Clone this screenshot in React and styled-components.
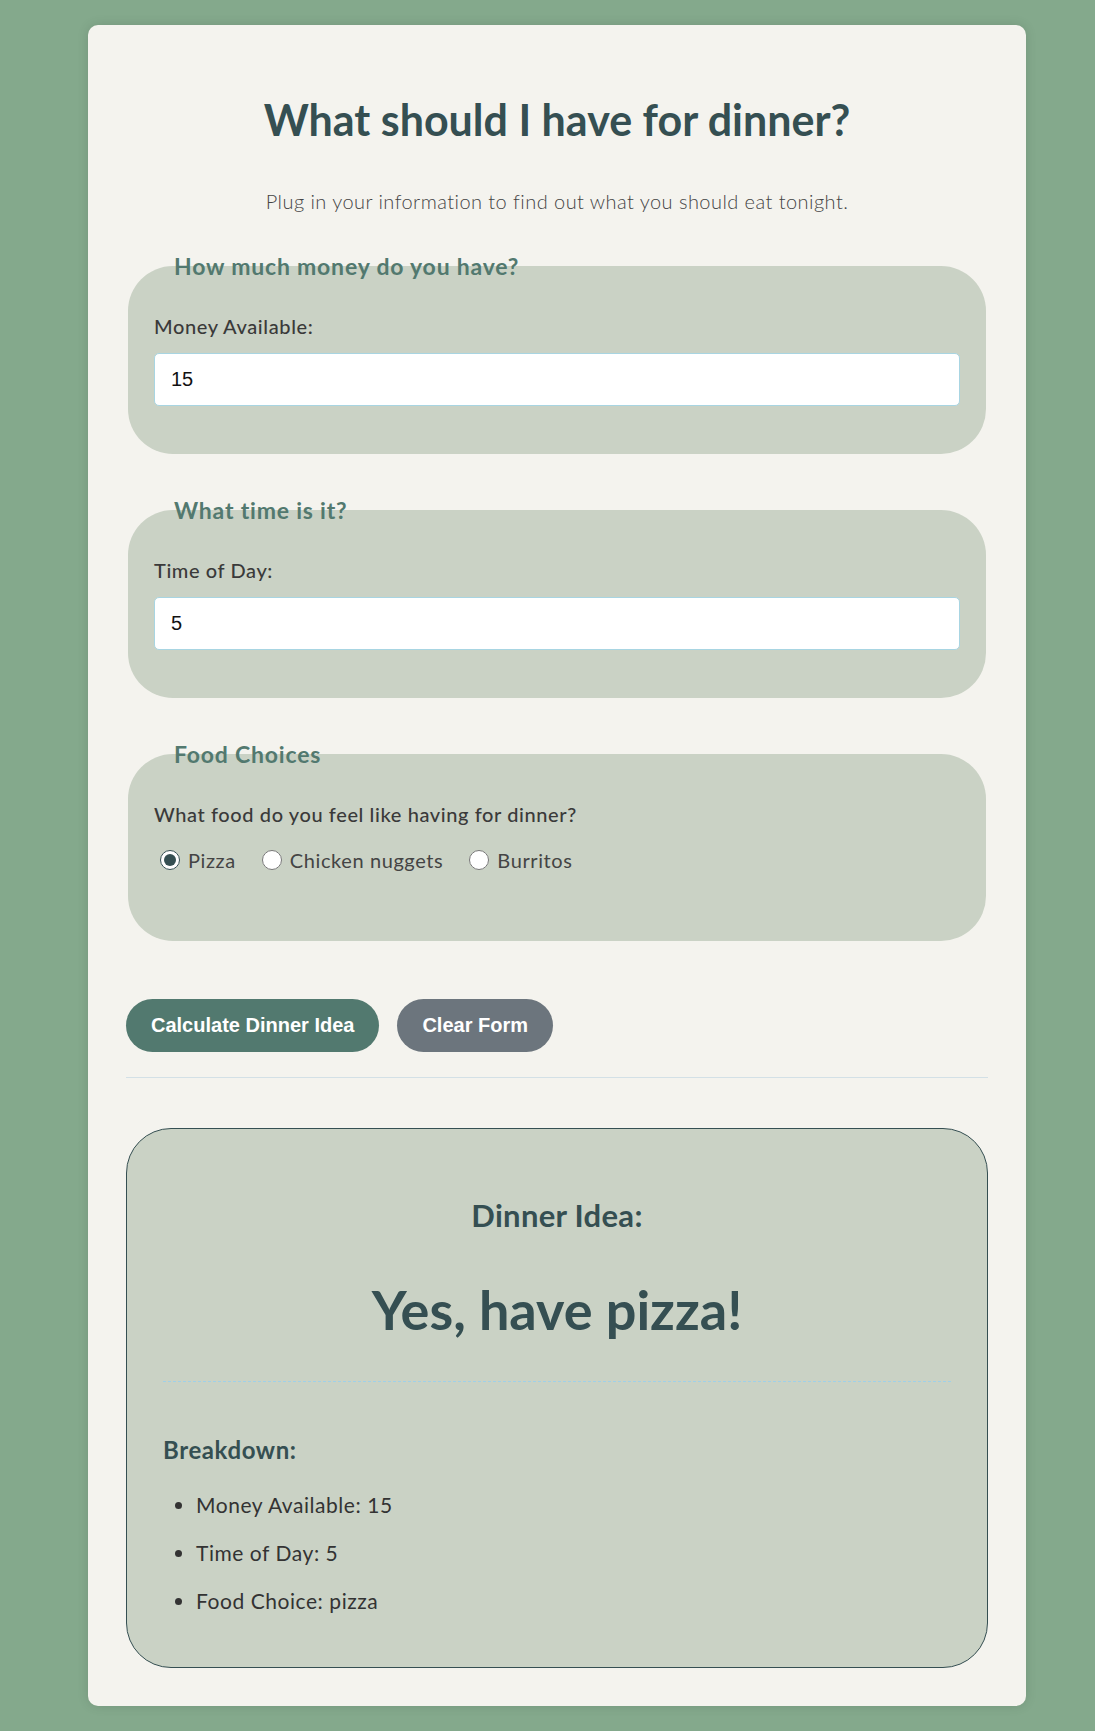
import React, { useState } from 'react';
import styled, { createGlobalStyle } from 'styled-components';

const GlobalStyle = createGlobalStyle`
  html, body {
    margin: 0;
    padding: 0;
  }
  body {
    background: #84a98c;
    font-family: Lato, "Open Sans", sans-serif;
  }
  * {
    box-sizing: border-box;
  }
`;

const Page = styled.div`
  padding: 25px 0 24px 88px;
`;

const Card = styled.main`
  width: 938px;
  background: #f4f3ee;
  border-radius: 10px;
  padding: 38px;
  box-shadow: 0 0 12px rgba(0, 0, 0, 0.12);
`;

const Title = styled.h1`
  margin: 33px 0 0;
  font-size: 43px;
  line-height: 48px;
  font-weight: 700;
  color: #354f52;
  text-align: center;
`;

const Subtitle = styled.p`
  margin: 46px 0 42px;
  font-size: 20px;
  line-height: 22px;
  font-weight: 300;
  letter-spacing: 0.45px;
  color: #444;
  text-align: center;
`;

const Section = styled.fieldset`
  margin: 0 2px 44px;
  padding: 37px 26px 48px;
  border: none;
  border-radius: 45px;
  background: #cad2c5;
  min-width: 0;
`;

const Legend = styled.legend`
  padding: 0 20px;
  font-size: 23px;
  line-height: 24px;
  font-weight: 700;
  letter-spacing: 0.8px;
  color: #52796f;
`;

const FieldLabel = styled.label`
  display: block;
  margin-bottom: 16px;
  font-size: 20px;
  line-height: 22px;
  font-weight: 500;
  letter-spacing: 0.6px;
  color: #3a3a3a;
`;

const TextInput = styled.input`
  display: block;
  width: 100%;
  height: 53px;
  padding: 0 16px;
  border: 1px solid #a8d5e2;
  border-radius: 5px;
  background: #fff;
  font-family: "Liberation Sans", Arial, sans-serif;
  font-size: 20px;
  color: #111;
  outline: none;
`;

const RadioGroup = styled.div`
  display: flex;
  align-items: center;
  height: 38px;
  margin-bottom: 14px;
`;

const RadioOption = styled.label`
  display: inline-flex;
  align-items: center;
  margin-right: 20px;
  font-size: 20px;
  line-height: 24px;
  font-weight: 400;
  letter-spacing: 0.6px;
  color: #444;
  cursor: pointer;

  input {
    width: 20px;
    height: 20px;
    margin: 0 8px 0 6px;
    accent-color: #354f52;
  }
`;

const ButtonRow = styled.div`
  display: flex;
  gap: 18px;
  padding-top: 14px;
`;

const Button = styled.button`
  height: 53px;
  padding: 0 25px;
  border: none;
  border-radius: 27px;
  background: ${(p) => (p.$variant === 'secondary' ? '#6c757d' : '#52796f')};
  color: #fff;
  font-family: "Liberation Sans", Arial, sans-serif;
  font-size: 20px;
  font-weight: 700;
  cursor: pointer;
`;

const Divider = styled.hr`
  height: 1px;
  margin: 25px 0 50px;
  border: none;
  background: #d3e0e6;
`;

const Result = styled.section`
  border: 1px solid #354f52;
  border-radius: 45px;
  background: #cad2c5;
  padding: 0 36px 36px;
`;

const Decision = styled.div`
  padding-bottom: 40px;
  border-bottom: 1px dashed #9fd0e8;
  text-align: center;
  color: #354f52;
`;

const DecisionLabel = styled.h3`
  margin: 68px 0 0;
  font-size: 31px;
  line-height: 36px;
  font-weight: 700;
  letter-spacing: 0.3px;
`;

const DecisionText = styled.p`
  margin: 46px 0 0;
  font-size: 54px;
  line-height: 62px;
  font-weight: 700;
`;

const BreakdownTitle = styled.h4`
  margin: 55px 0 0;
  font-size: 24px;
  line-height: 26px;
  font-weight: 700;
  letter-spacing: 0.6px;
  color: #354f52;
`;

const BreakdownList = styled.ul`
  margin: 30px 0 18px;
  padding-left: 33px;
  color: #333;

  li {
    font-size: 21px;
    line-height: 24px;
    font-weight: 400;
    letter-spacing: 0.55px;
  }

  li + li {
    margin-top: 24px;
  }
`;

const foods = [
  { value: 'pizza', label: 'Pizza' },
  { value: 'chicken nuggets', label: 'Chicken nuggets' },
  { value: 'burritos', label: 'Burritos' },
];

const App = () => {
  const [money, setMoney] = useState('15');
  const [time, setTime] = useState('5');
  const [food, setFood] = useState('pizza');

  const handleClear = () => {
    setMoney('');
    setTime('');
    setFood('');
  };

  return (
    <>
      <GlobalStyle />
      <Page>
        <Card>
          <Title>What should I have for dinner?</Title>
          <Subtitle>Plug in your information to find out what you should eat tonight.</Subtitle>

          <form onSubmit={(e) => e.preventDefault()}>
            <Section>
              <Legend>How much money do you have?</Legend>
              <FieldLabel htmlFor="money">Money Available:</FieldLabel>
              <TextInput id="money" type="text" value={money} onChange={(e) => setMoney(e.target.value)} />
            </Section>

            <Section>
              <Legend>What time is it?</Legend>
              <FieldLabel htmlFor="time">Time of Day:</FieldLabel>
              <TextInput id="time" type="text" value={time} onChange={(e) => setTime(e.target.value)} />
            </Section>

            <Section>
              <Legend>Food Choices</Legend>
              <FieldLabel as="div">What food do you feel like having for dinner?</FieldLabel>
              <RadioGroup>
                {foods.map((f) => (
                  <RadioOption key={f.value}>
                    <input
                      type="radio"
                      name="food"
                      value={f.value}
                      checked={food === f.value}
                      onChange={() => setFood(f.value)}
                    />
                    {f.label}
                  </RadioOption>
                ))}
              </RadioGroup>
            </Section>

            <ButtonRow>
              <Button type="submit">Calculate Dinner Idea</Button>
              <Button type="button" $variant="secondary" onClick={handleClear}>Clear Form</Button>
            </ButtonRow>
          </form>

          <Divider />

          <Result>
            <Decision>
              <DecisionLabel>Dinner Idea:</DecisionLabel>
              <DecisionText>Yes, have pizza!</DecisionText>
            </Decision>
            <BreakdownTitle>Breakdown:</BreakdownTitle>
            <BreakdownList>
              <li>Money Available: 15</li>
              <li>Time of Day: 5</li>
              <li>Food Choice: pizza</li>
            </BreakdownList>
          </Result>
        </Card>
      </Page>
    </>
  );
};

export default App;
